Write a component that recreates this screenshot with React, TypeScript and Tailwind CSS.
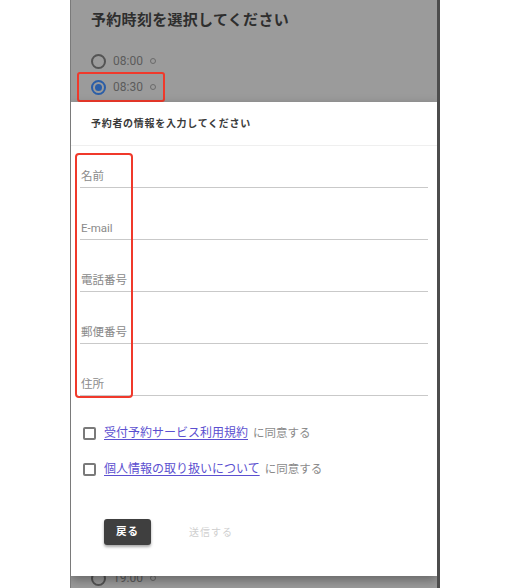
import React from 'react';

const FONT = "font-['Roboto','Noto_Sans_CJK_JP',sans-serif]";

const fields = ['名前', 'E-mail', '電話番号', '郵便番号', '住所'];

const TimeOption: React.FC<{ time: string; checked?: boolean }> = ({ time, checked }) => (
  <div className="flex items-center gap-[7px]">
    <span
      className={`flex size-[15px] items-center justify-center rounded-full border-2 ${
        checked ? 'border-[#2b5ea7]' : 'border-[#545454]'
      }`}
    >
      {checked && <span className="size-[7px] rounded-full bg-[#2b5ea7]" />}
    </span>
    <span className="text-[12px] leading-[16px] text-[#5c5c5c]">{time}</span>
    <span className="size-[6px] rounded-full border border-[#6a6a6a]" />
  </div>
);

const Agreement: React.FC<{ link: string }> = ({ link }) => (
  <div className="flex h-[20px] items-center">
    <span className="size-[13px] rounded-[2px] border-2 border-[#7a7a7a]" />
    <a href="#" className="ml-[8px] text-[12px] leading-[16px] text-[#5b4fd0] underline underline-offset-2">
      {link}
    </a>
    <span className="ml-[5px] text-[11.5px] leading-[16px] text-[#8a8a8a]">に同意する</span>
  </div>
);

export default function App() {
  return (
    <div className={`h-[588px] w-[505px] overflow-hidden bg-white ${FONT}`}>
      <div className="ml-[70px] flex h-full w-[370px] flex-col overflow-hidden border-l border-r-[3px] border-l-[#7a7a7a] border-r-[#4d4d4d] bg-[#9b9b9b] *:shrink-0">
        {/* time picker behind the dialog */}
        <h1 className="pl-[20px] pt-[9px] text-[15px] font-bold leading-[22px] tracking-[0.3px] text-[#2e2e2e]">
          予約時刻を選択してください
        </h1>
        <div className="mt-[19px] flex h-[22px] items-center pl-[20px]">
          <TimeOption time="08:00" />
        </div>
        <div className="ml-[6px] flex h-[30px] w-[88px] items-center rounded-[3px] border-2 border-[#f0392b] pl-[12px]">
          <TimeOption time="08:30" checked />
        </div>

        {/* dialog */}
        <div className="relative z-10 flex flex-col bg-white pb-[31px] shadow-[0_4px_10px_rgba(0,0,0,0.35)]">
          <div className="flex h-[44px] items-center border-b border-[#efefef] pl-[20px]">
            <span className="text-[10px] font-bold tracking-[0.7px] text-[#3a3a3a]">予約者の情報を入力してください</span>
          </div>

          <div className="flex flex-col gap-[32px] px-[9px] pt-[22px]">
            {fields.map((f) => (
              <div key={f} className="border-b border-[#c9c9c9] pb-[3px] pl-[1px]">
                <span className="block text-[11.5px] leading-[16px] text-[#8a8a8a]">{f}</span>
              </div>
            ))}
          </div>

          <div className="mt-[27px] flex flex-col gap-[16px] pl-[12px]">
            <Agreement link="受付予約サービス利用規約" />
            <Agreement link="個人情報の取り扱いについて" />
          </div>

          <div className="mt-[40px] flex items-center pl-[33px]">
            <button className="h-[26px] w-[47px] rounded-[3px] bg-[#3f3f3f] text-[10.5px] font-bold tracking-[1px] text-white shadow-[0_2px_3px_rgba(0,0,0,0.35)]">
              戻る
            </button>
            <button className="ml-[38px] text-[10px] tracking-[1px] text-[#cfcfcf]">送信する</button>
          </div>

          {/* annotation around the labels */}
          <div className="pointer-events-none absolute left-[4px] top-[51px] h-[245px] w-[58px] rounded-[4px] border-2 border-[#f0392b]" />
        </div>

        <div className="mt-[-6px] pl-[20px]">
          <TimeOption time="19:00" />
        </div>
      </div>
    </div>
  );
}
